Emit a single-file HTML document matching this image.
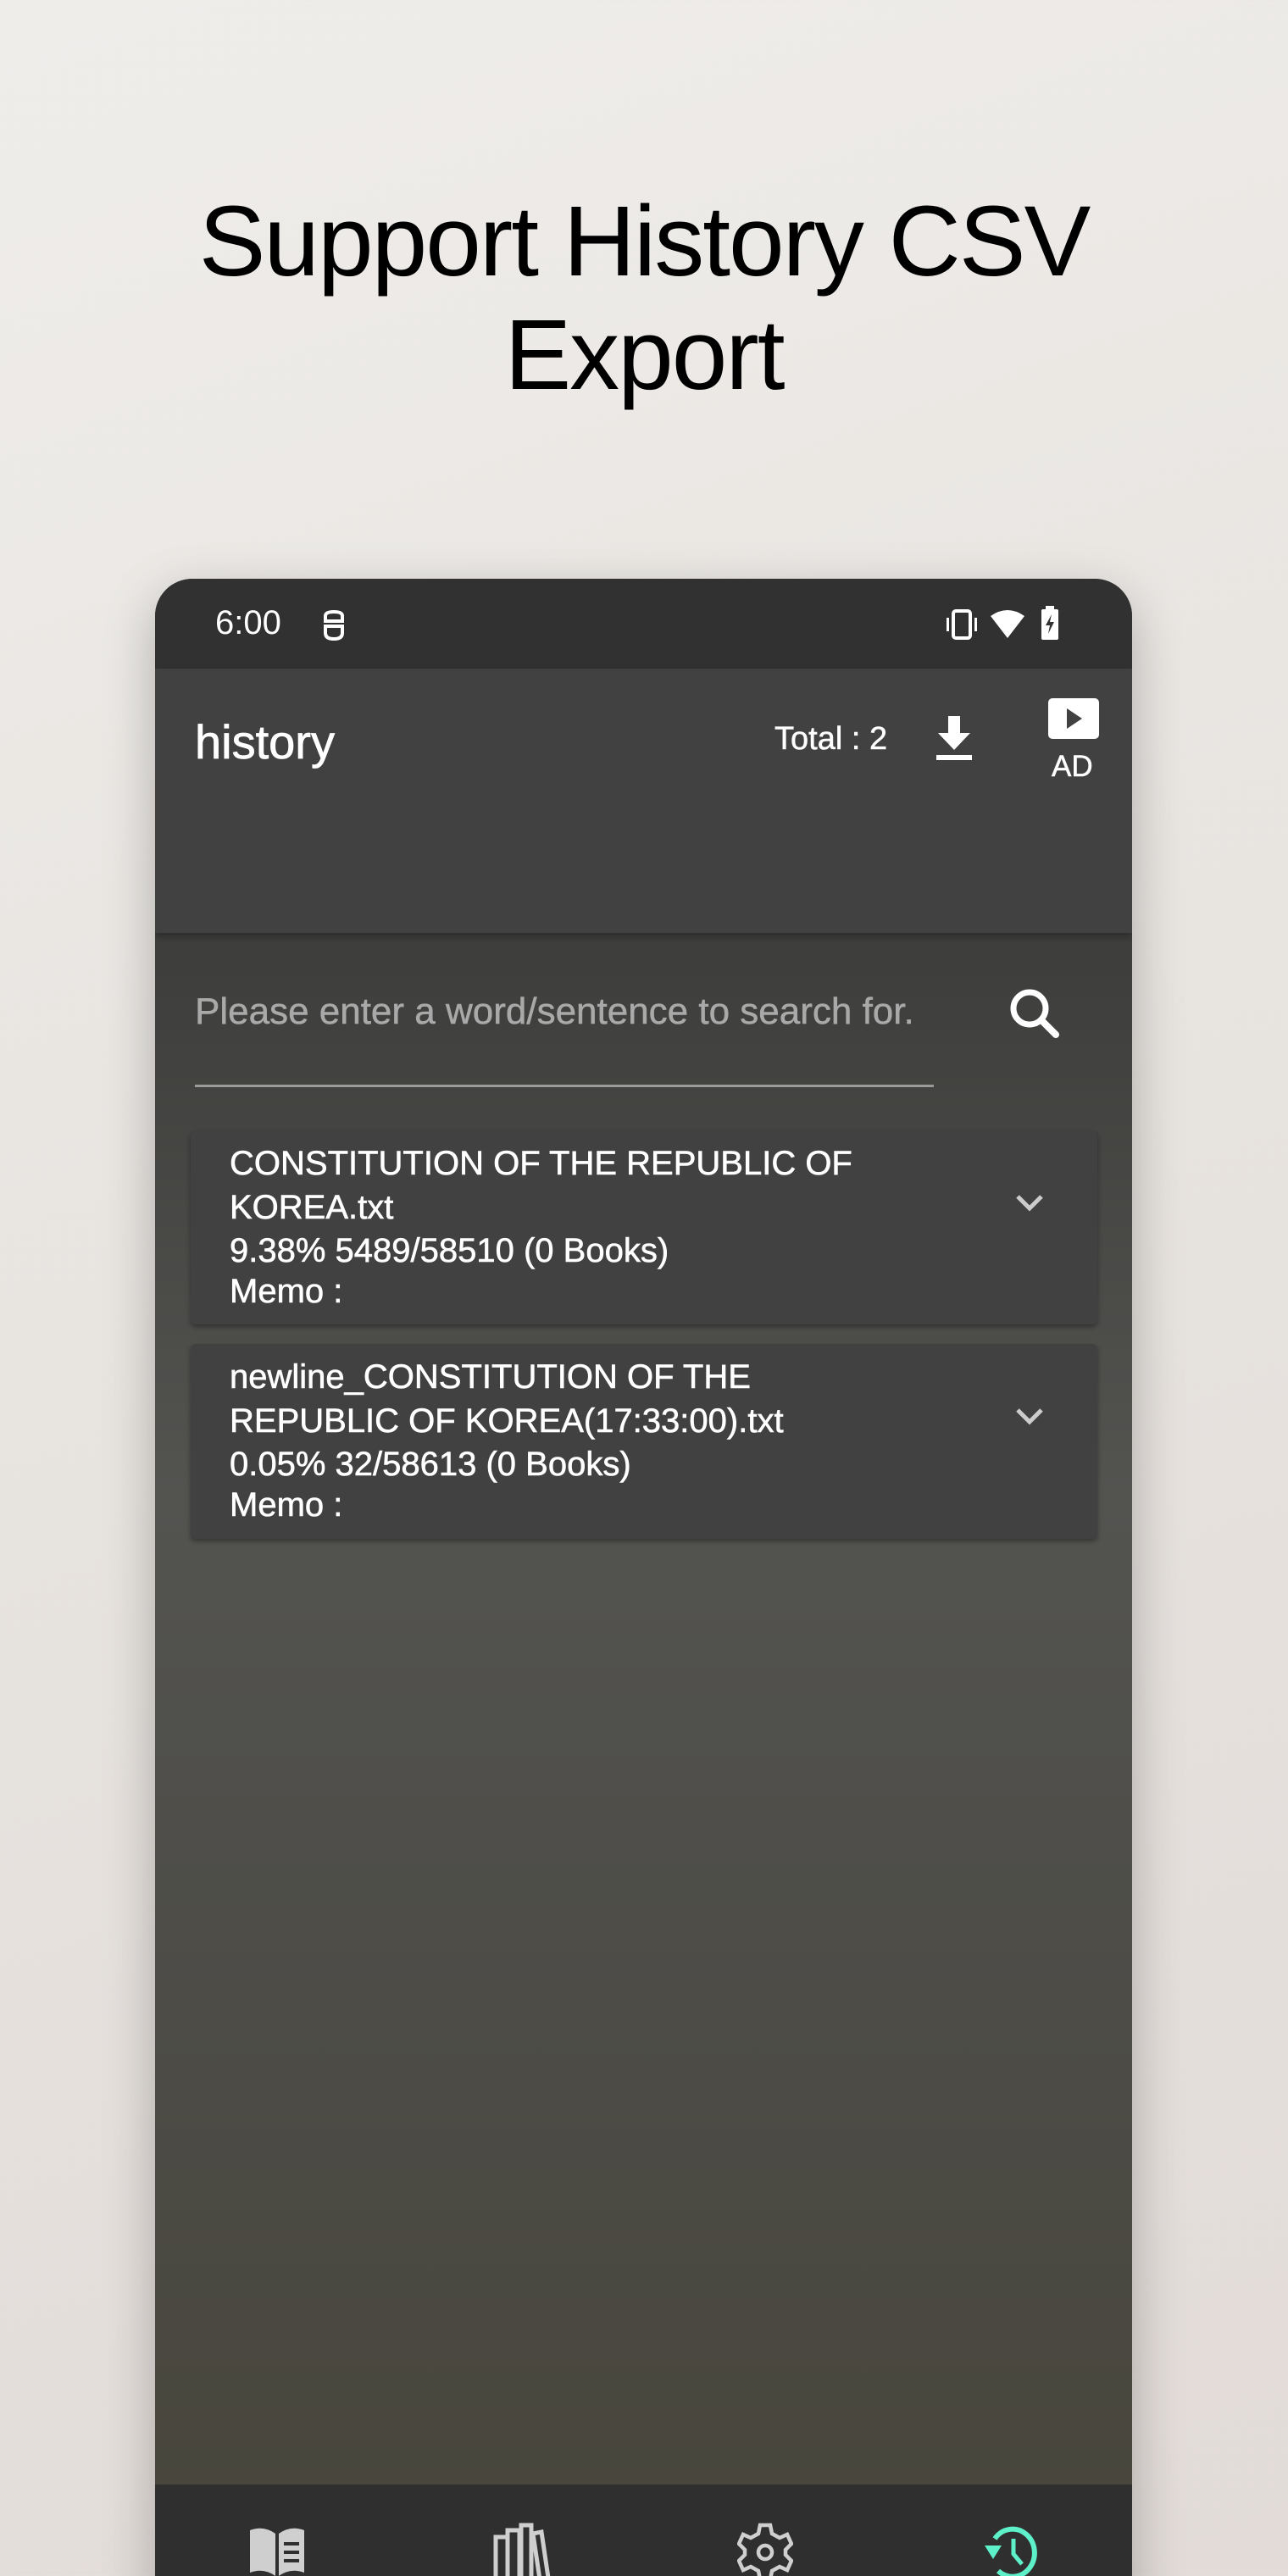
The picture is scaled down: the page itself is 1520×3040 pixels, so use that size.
<!DOCTYPE html>
<html><head><meta charset="utf-8">
<style>
*{margin:0;padding:0;box-sizing:border-box}
html,body{width:1520px;height:3040px;overflow:hidden}
body{background:linear-gradient(160deg,#efedea 0%,#e7e3df 50%,#e2dbd8 100%);font-family:"Liberation Sans",sans-serif;position:relative}
.title{position:absolute;left:0;width:1520px;text-align:center;font-size:118px;letter-spacing:-2px;color:#000;line-height:134px;top:218px}
.phone{position:absolute;left:183px;top:683px;width:1153px;height:2400px;border-radius:44px 44px 0 0;overflow:hidden;box-shadow:0 20px 60px rgba(0,0,0,.25);background:linear-gradient(180deg,#343434 0%,#3f3f3d 20%,#535350 45%,#4d4c47 70%,#47453a 100%)}
.status{position:absolute;left:0;top:0;width:100%;height:106px;background:#313131;color:#fff}
.appbar{position:absolute;left:0;top:106px;width:100%;height:312px;background:#414141;box-shadow:0 4px 8px rgba(0,0,0,.3)}
.w{color:#fff;position:absolute;white-space:nowrap}
.card{position:absolute;left:42px;width:1070px;background:#414141;border-radius:6px;box-shadow:0 3px 6px rgba(0,0,0,.35)}
.card .t{position:absolute;left:46px;color:#fff;font-size:40px;line-height:52px;-webkit-text-stroke:0.6px #fff}
.nav{position:absolute;left:0;top:2249px;width:100%;height:200px;background:#2f2f2f}
</style></head><body>
<div class="title">Support History CSV<br>Export</div>
<div class="phone">
 <div class="status">
  <div class="w" style="left:71px;top:30px;font-size:40px">6:00</div>
  <svg style="position:absolute;left:196px;top:36px" width="30" height="38" viewBox="0 0 30 38"><path d="M5 8 Q5 3 15 3 Q25 3 25 8 L25 14 L5 14 Z M5 20 L25 20 L25 28 Q25 35 15 35 Q5 35 5 28 Z" fill="none" stroke="#fff" stroke-width="4"/></svg>
  <svg style="position:absolute;left:930px;top:34px" width="44" height="40" viewBox="0 0 44 40"><rect x="12" y="4" width="20" height="32" rx="3" fill="none" stroke="#fff" stroke-width="4"/><rect x="4" y="12" width="3" height="16" fill="#fff"/><rect x="37" y="12" width="3" height="16" fill="#fff"/></svg>
  <svg style="position:absolute;left:984px;top:36px" width="44" height="36" viewBox="0 0 44 36"><path d="M2 8 Q22 -6 42 8 L22 34 Z" fill="#fff"/></svg>
  <svg style="position:absolute;left:1044px;top:32px" width="24" height="42" viewBox="0 0 24 42"><rect x="7" y="0" width="10" height="4" fill="#fff"/><rect x="2" y="4" width="20" height="36" rx="2" fill="#fff"/><path d="M14 10 L7 23 L12 23 L10 33 L17 19 L12 19 Z" fill="#313131"/></svg>
 </div>
 <div class="appbar">
  <div class="w" style="left:47px;top:54px;font-size:56px;-webkit-text-stroke:0.8px #fff">history</div>
  <div class="w" style="left:731px;top:62px;font-size:38px;-webkit-text-stroke:0.5px #fff">Total : 2</div>
  <svg style="position:absolute;left:918px;top:56px" width="50" height="56" viewBox="0 0 50 56"><path d="M18 0 H32 V20 H44 L25 40 L6 20 H18 Z" fill="#fff"/><rect x="4" y="46" width="42" height="6" fill="#fff"/></svg>
  <svg style="position:absolute;left:1054px;top:35px" width="60" height="50" viewBox="0 0 60 50"><rect x="0" y="0" width="60" height="48" rx="5" fill="#fff"/><path d="M22 12 L40 24 L22 36 Z" fill="#414141"/></svg>
  <div class="w" style="left:1058px;top:96px;font-size:35px;-webkit-text-stroke:0.5px #fff">AD</div>
 </div>
 <div class="w" style="left:47px;top:486px;font-size:44px;color:#a9a9a9;-webkit-text-stroke:0.5px #a9a9a9">Please enter a word/sentence to search for.</div>
 <svg style="position:absolute;left:1005px;top:480px" width="64" height="64" viewBox="0 0 64 64"><circle cx="27" cy="27" r="19" fill="none" stroke="#fff" stroke-width="7"/><path d="M41 41 L58 58" stroke="#fff" stroke-width="8" stroke-linecap="round"/></svg>
 <div style="position:absolute;left:47px;top:597px;width:872px;height:3px;background:#9a9a9a"></div>
 <div class="card" style="top:651px;height:229px">
  <div class="t" style="top:13px">CONSTITUTION OF THE REPUBLIC OF<br>KOREA.txt</div>
  <div class="t" style="top:116px">9.38% 5489/58510 (0 Books)</div>
  <div class="t" style="top:164px">Memo :</div>
  <svg style="position:absolute;left:970px;top:72px" width="40" height="30" viewBox="0 0 40 30"><path d="M6 6 L20 20 L34 6" fill="none" stroke="#ccc" stroke-width="5"/></svg>
 </div>
 <div class="card" style="top:903px;height:230px">
  <div class="t" style="top:13px">newline_CONSTITUTION OF THE<br>REPUBLIC OF KOREA(17:33:00).txt</div>
  <div class="t" style="top:116px">0.05% 32/58613 (0 Books)</div>
  <div class="t" style="top:164px">Memo :</div>
  <svg style="position:absolute;left:970px;top:72px" width="40" height="30" viewBox="0 0 40 30"><path d="M6 6 L20 20 L34 6" fill="none" stroke="#ccc" stroke-width="5"/></svg>
 </div>
 <div class="nav">
  <svg style="position:absolute;left:110px;top:50px" width="68" height="62" viewBox="0 0 68 62"><path d="M2 4 Q18 -2 32 8 L32 58 Q18 48 2 54 Z M36 8 Q50 -2 66 4 L66 54 Q50 48 36 58 Z" fill="#cfcfcf"/><path d="M42 20 H60 M42 30 H60 M42 40 H60" stroke="#2f2f2f" stroke-width="4"/></svg>
  <svg style="position:absolute;left:398px;top:44px" width="70" height="72" viewBox="0 0 70 72"><g fill="none" stroke="#cfcfcf" stroke-width="5"><rect x="4" y="18" width="14" height="50"/><rect x="18" y="10" width="14" height="58"/><rect x="34" y="4" width="12" height="64"/><path d="M48 14 L58 12 L66 66 L56 68 Z"/></g></svg>
  <svg style="position:absolute;left:687px;top:44px" width="66" height="72" viewBox="0 0 66 72"><path d="M27 4 H39 L41 14 L50 19 L59 15 L64 26 L57 33 L57 39 L64 46 L59 57 L50 53 L41 58 L39 68 H27 L25 58 L16 53 L7 57 L2 46 L9 39 L9 33 L2 26 L7 15 L16 19 L25 14 Z" fill="none" stroke="#cfcfcf" stroke-width="4.5"/><circle cx="33" cy="36" r="8" fill="none" stroke="#cfcfcf" stroke-width="4.5"/></svg>
  <svg style="position:absolute;left:975px;top:44px" width="68" height="72" viewBox="0 0 68 72"><path d="M16 20 A26 28 0 1 1 20 58" fill="none" stroke="#5ef0c8" stroke-width="6"/><path d="M4 28 L24 28 L14 44 Z" fill="#5ef0c8"/><path d="M38 20 V38 L48 50" fill="none" stroke="#5ef0c8" stroke-width="5"/></svg>
  <div class="w" style="left:950px;top:128px;font-size:40px;color:#5ef0c8;font-weight:bold">history</div>
 </div>
</div>
</body></html>
